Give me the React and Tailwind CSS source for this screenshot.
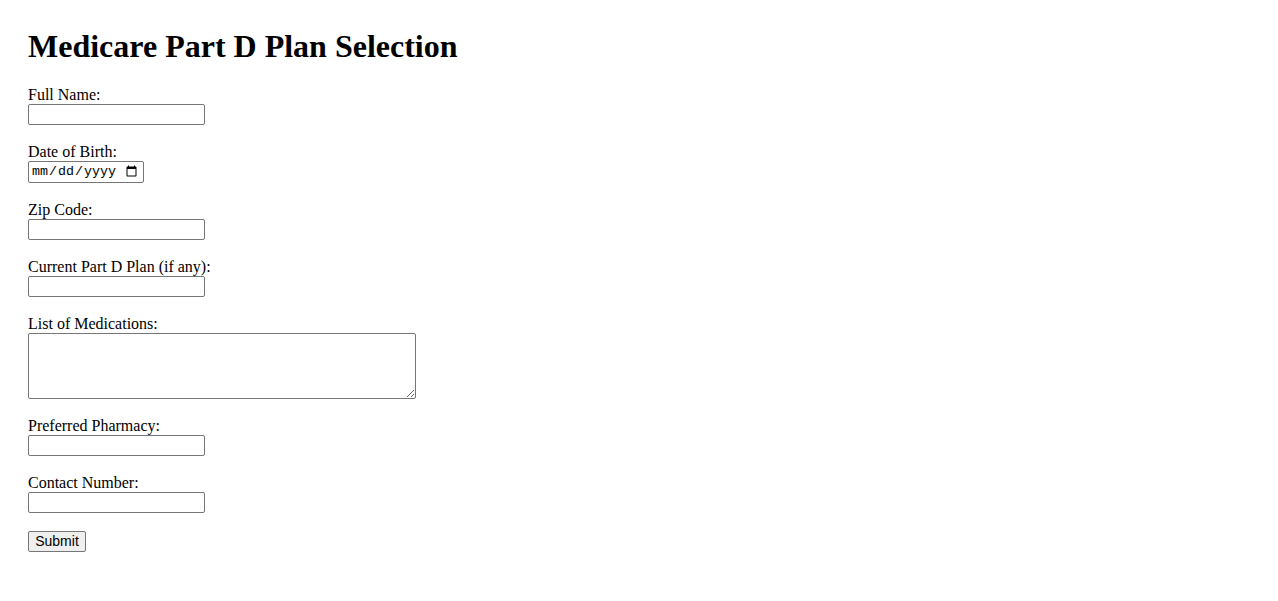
export default function App() {
  const field =
    "block w-[177px] h-[21px] border border-[#767676] rounded-[2px] bg-white px-[2px] text-[13.33px] font-['Liberation_Sans',Arial,sans-serif]";

  const rows = [
    { label: "Full Name:", type: "text" },
    { label: "Date of Birth:", type: "date" },
    { label: "Zip Code:", type: "text" },
    { label: "Current Part D Plan (if any):", type: "text" },
    { label: "List of Medications:", type: "textarea" },
    { label: "Preferred Pharmacy:", type: "text" },
    { label: "Contact Number:", type: "tel" },
  ];

  return (
    <div className="min-h-screen bg-white text-black font-['Liberation_Serif','Times_New_Roman',serif] pl-[28px] pt-[28px]">
      <h1 className="text-[32px] font-bold leading-[37px] mb-[21px]">
        Medicare Part D Plan Selection
      </h1>

      <form className="flex flex-col">
        {rows.map((row) => (
          <div key={row.label} className="flex flex-col mb-[18px]">
            <label className="text-[16px] leading-[18px]">{row.label}</label>
            {row.type === "textarea" ? (
              <textarea className="block w-[388px] h-[66px] border border-[#767676] rounded-[2px] bg-white p-[2px] text-[13.33px] resize font-['Liberation_Mono',monospace]" />
            ) : row.type === "date" ? (
              <input
                type="date"
                className="block w-[116px] h-[22px] border border-[#767676] rounded-[2px] bg-white pl-[2px] pr-[3px] text-[13.33px] font-['Liberation_Mono','DejaVu_Sans_Mono',monospace]"
              />
            ) : (
              <input type={row.type} className={field} />
            )}
          </div>
        ))}
        <button
          type="submit"
          className="block w-[58px] h-[21px] border border-[#767676] rounded-[2px] bg-[#efefef] text-[14px] leading-[15px] font-['Liberation_Sans',Arial,sans-serif]"
        >
          Submit
        </button>
      </form>
    </div>
  );
}
